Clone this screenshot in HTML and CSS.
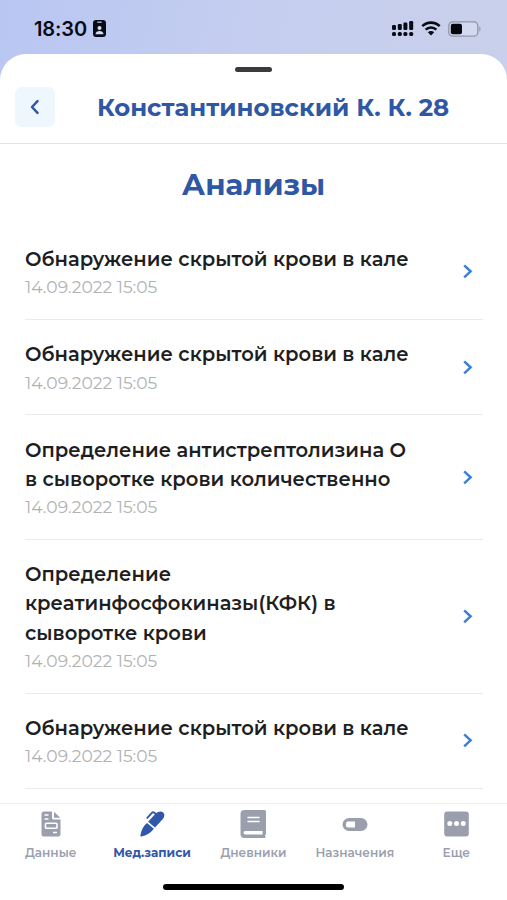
FILE: index.html
```html
<!DOCTYPE html>
<html lang="ru">
<head>
<meta charset="utf-8">
<meta name="viewport" content="width=device-width, initial-scale=1">
<title>Анализы</title>
<link rel="stylesheet" href="styles.css">
</head>
<body>
<svg width="0" height="0" class="defs"><symbol id="chevron" viewBox="0 0 12 16"><path d="M2.2 1.300 8.600 7.300l-6.400 6" fill="none" stroke="currentColor" stroke-width="2.500"/></symbol></svg>
<div class="phone">
  <div class="status">
    <div class="clock"><span>18:30</span>
      <svg width="13" height="17" viewBox="0 0 13 17"><rect width="13" height="17" rx="3" fill="#080b16"/><path d="M4.3 2.2h4.4" stroke="#b9c4e6" stroke-width="1.3"/><circle cx="6.5" cy="8" r="2" fill="#d5dcf2"/><path d="M2.5 14.2c.2-4.2 7.800-4.200 8 0z" fill="#d5dcf2"/></svg>
    </div>
    <div class="signals">
      <svg width="23" height="17" viewBox="0 0 23 17" fill="#080b16"><rect x="1" y="5" width="4" height="5" rx="1.3"/><rect x="6.800" y="4" width="4" height="6" rx="1.3"/><rect x="12.400" y="2.400" width="4" height="7.600" rx="1.300"/><rect x="18.200" y="1" width="4" height="9" rx="1.300"/><rect x="1" y="12" width="4" height="4" rx="1.500"/><rect x="6.800" y="12" width="4" height="4" rx="1.500"/><rect x="12.400" y="12" width="4" height="4" rx="1.500"/><rect x="18.200" y="12" width="4" height="4" rx="1.500"/></svg>
      <svg width="20" height="15" viewBox="0 0 20 15"><path d="M1.300 5.100c4.900-4.700 12.500-4.700 17.400 0M4.600 8.600c3.100-2.900 7.700-2.900 10.800 0" fill="none" stroke="#080b16" stroke-width="2.600"/><path d="M6.800 11.300c1.800-1.600 4.600-1.600 6.400 0L10 14.500z" fill="#080b16"/></svg>
      <svg width="33" height="16" viewBox="0 0 33 16"><rect x=".8" y=".8" width="29" height="14.400" rx="4" fill="#d3daf0" stroke="#9297a8" stroke-width="1.300"/><rect x="2.800" y="2.800" width="11.200" height="10.400" rx="2" fill="#05070d"/><path d="M31.300 5.500c1.700.7 1.700 4.300 0 5z" fill="#9297a8"/></svg>
    </div>
  </div>
  <div class="sheet">
    <div class="grabber"></div>
    <header class="header">
      <button class="back" aria-label="Назад"><svg width="12" height="16" viewBox="0 0 12 16"><path d="M8.500 2.200 3 8 8.500 13.800" fill="none" stroke="currentColor" stroke-width="2.500" stroke-linecap="round" stroke-linejoin="round"/></svg></button>
      <h1 class="patient">Константиновский К. К. 28</h1>
    </header>
    <main class="content">
      <h2 class="heading">Анализы</h2>
      <ul class="list">
        <li class="row"><div><p class="name">Обнаружение скрытой крови в кале</p><p class="date">14.09.2022 15:05</p></div><svg class="chev"><use href="#chevron"/></svg></li>
        <li class="row"><div><p class="name">Обнаружение скрытой крови в кале</p><p class="date">14.09.2022 15:05</p></div><svg class="chev"><use href="#chevron"/></svg></li>
        <li class="row"><div><p class="name">Определение антистрептолизина О<br>в сыворотке крови количественно</p><p class="date">14.09.2022 15:05</p></div><svg class="chev"><use href="#chevron"/></svg></li>
        <li class="row"><div><p class="name">Определение<br>креатинфосфокиназы(КФК) в<br>сыворотке крови</p><p class="date">14.09.2022 15:05</p></div><svg class="chev"><use href="#chevron"/></svg></li>
        <li class="row"><div><p class="name">Обнаружение скрытой крови в кале</p><p class="date">14.09.2022 15:05</p></div><svg class="chev"><use href="#chevron"/></svg></li>
      </ul>
    </main>
    <footer class="footer">
      <nav class="tabs">
        <a class="tab"><svg width="28" height="28" viewBox="0 0 28 28"><path d="M7 1.500h8v6.500a1.500 1.500 0 0 0 1.500 1.500H23.500V24a2.500 2.500 0 0 1-2.500 2.500H7A2.500 2.500 0 0 1 4.500 24V4A2.500 2.500 0 0 1 7 1.500zM17 1.800l6.200 6H17z" fill="currentColor"/><path d="M7.500 5h4M7.500 9h4M16 22.500h4" stroke="#fff" stroke-width="1.300"/><rect x="8.500" y="13.200" width="11.500" height="5" rx=".8" fill="none" stroke="#fff" stroke-width="1.600"/></svg><span>Данные</span></a>
        <a class="tab active"><svg width="28" height="28" viewBox="0.500 0 28 28"><path d="M10.600 11.800 18.200 3.600c2.400-2.500 5.700-2.800 7.500-1.200 1.800 1.700 1.300 4.800-.8 7.100l-7.400 8z" fill="currentColor"/><path d="M9.500 13 16.400 18.700c-3 3.900-7.200 6.700-12.800 7.900-.6.100-.9-.3-.8-.8.900-5.300 2.900-9.800 6.700-12.800z" fill="currentColor"/><path d="M9.800 7.800l4.600-4.900c.7-.8 1.600-.8 2.400-.2l2 1.800" fill="none" stroke="currentColor" stroke-width="1.900" stroke-linecap="round"/></svg><span>Мед.записи</span></a>
        <a class="tab"><svg width="28" height="28" viewBox="0 0 28 28"><path d="M5.500 0H25.500a1.500 1.500 0 0 1 1.500 1.500V24.500l-1.200.8.700 1.200a1 1 0 0 1-1 1.500H5.500a4 4 0 0 1-4-4V4a4 4 0 0 1 4-4z" fill="currentColor"/><path d="M9 7.500h11M9 11.500h11" stroke="#fff" stroke-width="1.500" stroke-linecap="round"/><path d="M6.300 21h17.200v3.600H6.300a1.800 1.800 0 0 1 0-3.600z" fill="#fff"/></svg><span>Дневники</span></a>
        <a class="tab"><svg width="28" height="28" viewBox="0 0 28 28"><rect x="1.500" y="8" width="25" height="13" rx="6.500" fill="currentColor"/><path d="M7 11.500h7v6H7a2 2 0 0 1-2-2v-2a2 2 0 0 1 2-2z" fill="#fff"/></svg><span>Назначения</span></a>
        <a class="tab"><svg width="28" height="28" viewBox="-0.500 0 28 28"><rect x="1.700" y="1.500" width="24.600" height="25" rx="3" fill="currentColor"/><g fill="#fff"><circle cx="7.300" cy="13.600" r="2.500"/><circle cx="14" cy="13.600" r="2.500"/><circle cx="20.700" cy="13.600" r="2.500"/></g></svg><span>Еще</span></a>
      </nav>
      <div class="home"></div>
    </footer>
  </div>
</div>
</body>
</html>
```

FILE: styles.css
```css
* { box-sizing: border-box; margin: 0; padding: 0; }
body { font-family: Montserrat, Inter, "Noto Sans", sans-serif; overflow: hidden; }
.defs { position: absolute; }
.phone { width: 507px; height: 900px; display: flex; flex-direction: column; background: linear-gradient(100deg, #b9c6f2 0, #c5cef0 50%, #c9d0ea 100%) top / 100% 90px no-repeat #fff; }
.status { height: 54px; display: flex; justify-content: space-between; align-items: center; padding: 3px 26px 0 34px; }
.clock { display: flex; align-items: center; gap: 6px; color: #080b16; font: 600 20px/24px Inter, sans-serif; letter-spacing: -.1px; }
.signals { display: flex; align-items: center; gap: 7px; }
.sheet { flex: 1; min-height: 0; display: flex; flex-direction: column; background: #fff; border-radius: 26px 26px 0 0; }
.grabber { width: 37px; height: 5px; margin: 12.500px auto 0; border-radius: 3px; background: #3b3b3c; }
.header { height: 72px; display: flex; align-items: center; padding: 0 15px; border-bottom: 1px solid #e1e2e4; }
.back { width: 40px; height: 40px; flex: none; display: flex; align-items: center; justify-content: center; border: 0; border-radius: 7px; background: #eef6fe; color: #33569d; }
.patient { margin: 0 0 0 42px; white-space: nowrap; color: #3057a4; font-size: 24.400px; line-height: 30px; font-weight: 700; }
.content { flex: 1; min-height: 0; overflow: hidden; }
.heading { margin-top: 22.500px; height: 38px; color: #3057a4; text-align: center; font-size: 29.300px; line-height: 38px; font-weight: 700; }
.list { list-style: none; margin: 20.500px 24px 0 25px; }
.row { display: flex; align-items: center; justify-content: space-between; padding: 20.500px 9px 19px 0; border-bottom: 1px solid #ebebec; }
.name { white-space: nowrap; color: #1e1e1f; font-size: 19.560px; line-height: 29.300px; font-weight: 600; }
.date { color: #b2b2b3; font-size: 17.150px; line-height: 25.500px; font-weight: 400; }
.chev { width: 12px; height: 16px; flex: none; color: #3b7fd9; }
.footer { height: 97px; flex: none; border-top: 1px solid #eeeeef; background: #fff; }
.tabs { display: grid; grid-template-columns: repeat(5, 1fr); padding: 6px 0 0; }
.tab { display: flex; flex-direction: column; align-items: center; color: #9b9fad; font-size: 12.100px; line-height: 16px; font-weight: 600; gap: 7px; }
.tab.active { color: #3057a9; font-weight: 700; }
.home { width: 181px; height: 6px; margin: 23px auto 0; border-radius: 3px; background: #000; }
```
